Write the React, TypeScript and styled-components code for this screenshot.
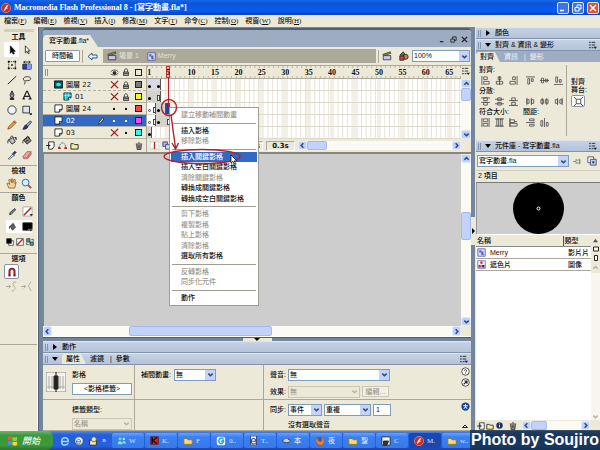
import React from "react";
import styled, { createGlobalStyle, css } from "styled-components";

const sans = `"Liberation Sans", "Noto Sans CJK TC", sans-serif`;
const serif = `"Liberation Serif", "Noto Sans CJK TC", serif`;
const c = {
  face: "#ece9d8",
  line: "#aca899",
  edge: "#73869c",
  dark: "#4a5f78",
  tab: "#9dacc1",
  select: "#316ac5",
  field: "#7f9db9",
  head: "#b4c3d9",
  ink: "#111",
  dim: "#9b988c",
  red: "#b5202c",
};

const GlobalStyle = createGlobalStyle`
  *, *::before, *::after { box-sizing: border-box; }
  body { margin: 0; overflow: hidden; }
  button, input, select { font: inherit; color: inherit; margin: 0; padding: 0; border-radius: 0; }
  svg { display: block; flex: none; }
`;

const Shell = styled.div`
  position: relative;
  display: grid;
  grid-template-rows: 15px 12px minmax(0, 1fr) 19px;
  height: 100vh;
  background: ${c.face};
  color: ${c.ink};
  font: 500 7px/10px ${sans};
  white-space: nowrap;
`;

/* ---------- window chrome ---------- */

const TitleBar = styled.header`
  display: flex;
  align-items: center;
  gap: 3px;
  padding: 0 1px 0 1px;
  background: linear-gradient(#1a66e4, #0a55dc 25%, #0a5cf0 70%, #0743c4);
  color: #fff;
`;
const Title = styled.h1`
  flex: 1;
  margin: 0;
  font: 700 8px/12px ${serif};
`;
const WinButton = styled.button<{ $close?: boolean }>`
  display: grid;
  place-items: center;
  width: 12px;
  height: 12px;
  border: 1px solid #dce6fa;
  border-radius: 2px;
  background: ${(p) => (p.$close ? "#dc5331" : "#3c74e6")};
`;
const MenuBar = styled.nav`
  display: flex;
  align-items: center;
  gap: 7px;
  padding-left: 4px;
  font-family: ${serif};
`;
const MenuEntry = styled.button`
  border: 0;
  background: none;
  u { text-decoration-thickness: 1px; }
`;
const Body = styled.div`
  display: grid;
  grid-template-columns: 38px minmax(0, 1fr) 125px;
  min-height: 0;
`;

/* ---------- toolbox ---------- */

const ToolBox = styled.aside`
  display: flex;
  flex-direction: column;
  padding-top: 2px;
  border-right: 1px solid #fff;
`;
const Grip = styled.div`
  height: 3px;
  margin: 0 3px 0 4px;
  background: #d3cfbf;
`;
const ToolHeading = styled.h2`
  margin: 0;
  font: 700 7px/10px ${sans};
  text-align: center;
`;
const ToolSection = styled.section<{ $h: number }>`
  min-height: ${(p) => p.$h}px;
  border-bottom: 1px solid ${c.line};
`;
const ToolGrid = styled.div`
  display: grid;
  grid-template-columns: 15px 15px;
  grid-auto-rows: 15px;
  margin-left: 4px;
`;
const Tool = styled.button<{ $on?: boolean; $boxed?: boolean }>`
  display: grid;
  place-items: center;
  border: 1px solid ${(p) => (p.$boxed ? "#8a93a8" : "transparent")};
  border-radius: ${(p) => (p.$boxed ? 2 : 0)}px;
  background: ${(p) => (p.$on ? "#fff" : "none")};
`;
const FillRow = styled.div<{ $on?: boolean }>`
  display: grid;
  grid-template-columns: 14px 12px;
  align-items: center;
  height: ${(p) => (p.$on ? 13 : 17)}px;
  margin: 0 5px 0 6px;
  padding-left: 2px;
  background: ${(p) => (p.$on ? "#fff" : "none")};
`;
const MiniRow = styled.div`
  display: flex;
  gap: 2px;
  padding: 5px 6px 0;
`;

/* ---------- document window ---------- */

const Center = styled.main`
  position: relative;
  display: grid;
  grid-template-rows: minmax(0, 1fr) 4px auto;
  min-width: 0;
  padding: 1px 4px 0 4px;
  background: ${c.edge};
  border-left: 1px solid ${c.dark};
`;
const DocWindow = styled.section`
  display: grid;
  grid-template-rows: 17px 19px auto minmax(0, 1fr) 11px;
  min-height: 0;
  border-top: 2px solid ${c.dark};
  background: ${c.face};
  border-radius: 4px 4px 0 0;
  overflow: hidden;
`;
const TabBar = styled.div`
  display: flex;
  align-items: end;
  justify-content: space-between;
  background: ${c.tab};
  border-radius: 0 4px 0 0;
`;
const DocTab = styled.button`
  height: 12px;
  padding: 0 9px 0 6px;
  border: 0;
  background: ${c.face};
  clip-path: polygon(0 3px, 2px 0, calc(100% - 8px) 0, 100% 100%, 0 100%);
  text-align: left;
`;
const DocButtons = styled.div`
  display: flex;
  gap: 2px;
  padding: 0 2px 3px 0;
`;
const PlainButton = styled.button`
  display: grid;
  place-items: center;
  min-width: 9px;
  height: 9px;
  border: 0;
  background: none;
`;
const EditBar = styled.div`
  display: flex;
  align-items: center;
  padding: 0 1px 0 2px;
  border-bottom: 1px solid ${c.line};
`;
const TimelineButton = styled.button`
  width: 35px;
  height: 12px;
  border: 1px solid #8f9aa8;
  border-radius: 1px;
  background: #fff;
`;
const VRule = styled.i`
  width: 1px;
  height: 13px;
  margin: 0 2px;
  background: ${c.line};
`;
const Crumbs = styled.div`
  display: flex;
  flex: 1;
  align-items: center;
  gap: 2px;
  height: 14px;
  margin-left: 4px;
  padding-left: 4px;
  background: ${c.line};
  color: #e4e1d6;
`;
const Crumb = styled.span`
  margin-right: 6px;
`;
const EditIcons = styled.div`
  display: flex;
  gap: 7px;
  margin: 0 3px 0 1px;
`;

/* ---------- fields ---------- */

const SelectBox = styled.span<{ $w?: number; $off?: boolean }>`
  display: flex;
  width: ${(p) => (p.$w ? `${p.$w}px` : "auto")};
  height: 12px;
  border: 1px solid ${(p) => (p.$off ? "#cac7b8" : c.field)};
  background: ${(p) => (p.$off ? c.face : "#fff")};
  color: ${(p) => (p.$off ? c.dim : c.ink)};
`;
const NativeSelect = styled.select`
  flex: 1;
  min-width: 0;
  padding-left: 1px;
  border: 0;
  background: none;
  appearance: none;
  opacity: 1;
  outline: none;
`;
const DropMark = styled.span<{ $off?: boolean }>`
  display: grid;
  place-items: center;
  width: 10px;
  background: ${(p) => (p.$off ? c.face : "#c3d3fb")};
`;
const TextField = styled.input<{ $w: number }>`
  width: ${(p) => p.$w}px;
  height: 12px;
  border: 1px solid ${c.field};
  background: #fff;
  padding: 0 2px;
  &::placeholder { color: ${c.ink}; opacity: 1; text-align: center; }
`;

/* ---------- timeline ---------- */

const Timeline = styled.div`
  display: grid;
  grid-template-columns: 104px minmax(0, 1fr) 10px;
  grid-template-rows: 13px auto 13px;
  border-bottom: 2px solid #8b8878;
`;
const LayerHead = styled.div`
  display: flex;
  align-items: center;
  justify-content: space-between;
  padding: 0 2px 0 2px;
  border-right: 1px solid ${c.line};
  border-bottom: 1px solid ${c.line};
`;
const HeadIcons = styled.div`
  display: grid;
  grid-template-columns: repeat(3, 12px);
  justify-items: center;
  align-items: center;
`;
const Ruler = styled.div`
  display: grid;
  grid-template-columns: repeat(67, minmax(0, 1fr));
  align-items: center;
  border-bottom: 1px solid ${c.line};
  background:
    linear-gradient(90deg, #b9b5a3 1px, transparent 1px) 0 0 / calc(100% / 67) 2px repeat-x,
    linear-gradient(90deg, #b9b5a3 1px, transparent 1px) 0 100% / calc(100% / 67) 2px repeat-x;
  font: 700 8px/11px ${serif};
`;
const FrameNo = styled.span<{ $at: number }>`
  grid-column: ${(p) => p.$at};
  grid-row: 1;
  display: flex;
  justify-content: center;
`;
const PlayHead = styled.i`
  grid-column: 5;
  grid-row: 1;
  align-self: stretch;
  border: 1px solid #cc3a3a;
  background: #f3a3a0;
`;
const Layers = styled.ul`
  margin: 0;
  padding: 0;
  list-style: none;
  border-right: 1px solid ${c.line};
`;
const LayerRow = styled.li<{ $active?: boolean; $child?: boolean; $dash?: boolean }>`
  display: flex;
  align-items: center;
  gap: 3px;
  height: 12px;
  padding: 0 2px 0 ${(p) => (p.$child ? 20 : 11)}px;
  border-bottom: 1px ${(p) => (p.$dash ? "dashed" : "solid")} #b5b1a1;
  background: ${(p) => (p.$active ? c.select : c.face)};
  color: ${(p) => (p.$active ? "#fff" : c.ink)};
  font-family: "DejaVu Sans", "Noto Sans CJK TC", sans-serif;
`;
const LayerName = styled.span`
  flex: 1;
`;
const Dot = styled.i`
  width: 2px;
  height: 2px;
  background: currentColor;
`;
const Swatch = styled.i<{ $c: string }>`
  width: 7px;
  height: 7px;
  border: 1px solid #222;
  background: ${(p) => p.$c};
`;
const Tracks = styled.div`
  background: #fff;
`;
const Track = styled.div`
  display: grid;
  grid-template-columns: repeat(67, minmax(0, 1fr));
  height: 12px;
  border-bottom: 1px solid #dedacb;
  background: linear-gradient(90deg, transparent calc(100% - 1px), #e6e2d6 0) 0 0 / calc(100% / 67) 100%;
`;
const Shade = styled.i<{ $at: number }>`
  grid-column: ${(p) => p.$at};
  grid-row: 1;
  background: #f3efe6;
`;
const Span = styled.i<{ $from: number; $to: number; $fill: string }>`
  grid-column: ${(p) => p.$from} / ${(p) => p.$to};
  grid-row: 1;
  background: ${(p) => p.$fill};
  border-right: 1px solid #555;
`;
const KeyMark = styled.i<{ $at: number; $kind: "dot" | "ring" | "box" }>`
  grid-column: ${(p) => p.$at};
  grid-row: 1;
  align-self: end;
  justify-self: center;
  width: 3px;
  height: ${(p) => (p.$kind === "box" ? 6 : 3)}px;
  margin-bottom: ${(p) => (p.$kind === "box" ? 1 : 2)}px;
  ${(p) =>
    p.$kind === "dot"
      ? css`background: #000; border-radius: 2px;`
      : css`border: 1px solid #444; background: #fff; border-radius: ${p.$kind === "ring" ? 2 : 0}px;`}
`;
const FootBar = styled.div<{ $rule?: boolean }>`
  display: flex;
  align-items: center;
  gap: 3px;
  padding: 0 ${(p) => (p.$rule ? 3 : 0)}px 0 3px;
  border-right: ${(p) => (p.$rule ? `1px solid ${c.line}` : "0")};
  font: 700 7px/10px "DejaVu Sans", sans-serif;
`;
const FootGap = styled.span`
  flex: 1;
`;
const Cellbox = styled.span<{ $w: number }>`
  width: ${(p) => p.$w}px;
  height: 10px;
  border: 1px solid ${c.line};
  border-right-color: #fff;
  border-bottom-color: #fff;
  text-align: center;
  line-height: 9px;
`;
const ScrollSlot = styled.div<{ $w: number }>`
  width: ${(p) => p.$w}px;
  height: 9px;
  display: grid;
`;

/* ---------- scroll bars ---------- */

const Bar = styled.div<{ $v?: boolean }>`
  display: flex;
  flex-direction: ${(p) => (p.$v ? "column" : "row")};
  min-width: 0;
  min-height: 0;
  background: #fbfaf5;
`;
const BarButton = styled.button`
  display: grid;
  place-items: center;
  flex: 0 0 9px;
  border: 1px solid #e2e9fc;
  border-radius: 2px;
  background: #bfd0fa;
`;
const Part = styled.div<{ $grow: number; $thumb?: boolean }>`
  flex: ${(p) => p.$grow} 0 0;
  ${(p) => p.$thumb && css`border: 1px solid #a5bbee; border-radius: 2px; background: #c2d2fb;`}
`;

const Stage = styled.div`
  display: grid;
  grid-template-columns: minmax(0, 1fr) 10px;
  min-height: 0;
  border-left: 1px solid #8b8878;
`;
const Canvas = styled.div`
  background: #cdcdcd;
`;
const HFoot = styled.div`
  display: grid;
  grid-template-columns: minmax(0, 1fr) 10px;
  border-bottom: 1px solid #fff;
`;
const Splitter = styled.div`
  display: grid;
  justify-content: center;
  background: ${c.edge};
  border-top: 1px solid ${c.dark};
`;
const SplitHandle = styled.button`
  display: grid;
  place-items: center;
  width: 29px;
  height: 3px;
  border: 0;
  background: ${c.face};
`;
const SideHandle = styled.button`
  position: absolute;
  right: 0;
  top: 47%;
  display: grid;
  place-items: center;
  width: 4px;
  height: 28px;
  border: 0;
  background: ${c.face};
`;

/* ---------- panels ---------- */

const PanelHead = styled.div`
  display: flex;
  align-items: center;
  gap: 4px;
  height: 12px;
  padding: 0 3px 0 2px;
  border-top: 1px solid #dfe6f0;
  border-bottom: 1px solid #8393aa;
  background: linear-gradient(#c6d2e4, ${c.head});
`;
const PanelTitle = styled.span`
  flex: 1;
`;
const HeadGrip = styled.i`
  width: 3px;
  height: 7px;
  border: solid #8695ab;
  border-width: 0 1px;
`;
const TabButton = styled.button<{ $on?: boolean; $light?: boolean }>`
  height: 10px;
  align-self: end;
  padding: 0 6px 0 4px;
  border: 0;
  background: ${(p) => (p.$on ? c.face : "none")};
  color: ${(p) => (p.$light ? "#e5ebf4" : c.ink)};
  clip-path: ${(p) => (p.$on ? "polygon(0 2px, 2px 0, calc(100% - 5px) 0, 100% 100%, 0 100%)" : "none")};
`;
const Props = styled.div`
  display: grid;
  grid-template-columns: 92px 129px minmax(0, 1fr) 12px;
  grid-template-rows: 35px 31px;
  background: ${c.face};
`;
const PropCell = styled.div<{ $noRule?: boolean }>`
  display: flex;
  flex-direction: column;
  gap: 4px;
  padding: 3px 3px 0 6px;
  border-right: ${(p) => (p.$noRule ? "0" : `1px solid ${c.line}`)};
  border-bottom: 1px solid ${c.line};
`;
const FrameCell = styled.div`
  display: grid;
  grid-template-columns: 23px 60px;
  grid-template-rows: 14px 13px;
  align-items: center;
  padding: 3px 4px 0 3px;
  border-right: 1px solid ${c.line};
  border-bottom: 1px solid ${c.line};
  column-gap: 3px;
`;
const FrameIcon = styled.div`
  grid-row: 1 / 3;
`;
const FieldRow = styled.div`
  display: flex;
  align-items: center;
  gap: 2px;
  height: 13px;
`;
const Label = styled.label<{ $w?: number }>`
  width: ${(p) => (p.$w ? `${p.$w}px` : "auto")};
`;
const Note = styled.span`
  padding-left: 18px;
`;
const PushButton = styled.button`
  width: 27px;
  height: 11px;
  border: 1px solid #cac7b8;
  background: #f2f0e6;
  color: ${c.dim};
`;
const SideIcons = styled.div<{ $spread?: boolean }>`
  display: flex;
  flex-direction: column;
  align-items: center;
  justify-content: ${(p) => (p.$spread ? "space-between" : "start")};
  gap: 2px;
  padding: 2px 0;
  border-bottom: 1px solid ${c.line};
`;

/* ---------- right column ---------- */

const Right = styled.aside`
  display: flex;
  flex-direction: column;
  min-height: 0;
  border-left: 1px solid #dfe6f0;
`;
const RightTabs = styled.div`
  display: flex;
  align-items: end;
  height: 11px;
  background: ${c.tab};
  color: #e5ebf4;
`;
const AlignPanel = styled.div`
  display: grid;
  grid-template-columns: 88px minmax(0, 1fr);
  height: 78px;
  padding: 3px 0 4px 3px;
`;
const AlignLeft = styled.div`
  border-right: 1px solid ${c.line};
`;
const AlignRow = styled.div`
  display: flex;
  gap: 5px;
  height: 11px;
  padding-left: 2px;
  align-items: center;
`;
const AlignLabels = styled.div`
  display: grid;
  grid-template-columns: 44px 1fr;
  height: 10px;
`;
const AlignBtn = styled.button<{ $gap?: boolean }>`
  width: 9px;
  height: 9px;
  margin-left: ${(p) => (p.$gap ? 3 : 0)}px;
  border: 0;
  background: none;
`;
const StageAlign = styled.div`
  padding: 13px 0 0 4px;
  line-height: 8px;
`;
const StageButton = styled.button`
  display: grid;
  place-items: center;
  width: 14px;
  height: 12px;
  margin-top: 1px;
  border: 1px solid #8a93a8;
  border-radius: 2px;
  background: #fff;
`;
const LibRow = styled.div`
  display: grid;
  grid-template-columns: minmax(0, 1fr) 10px 10px;
  align-items: center;
  gap: 4px;
  height: 18px;
  padding: 0 3px 0 1px;
`;
const LibCount = styled.div`
  height: 12px;
  padding-left: 2px;
  border-top: 1px solid #d3cfbf;
`;
const Preview = styled.div`
  display: grid;
  place-items: center;
  height: 53px;
  border-top: 1px solid #777;
  border-left: 1px solid #999;
  border-bottom: 1px solid #fff;
  background: #cdcdcd;
`;
const LibBody = styled.div`
  display: grid;
  grid-template-columns: minmax(0, 1fr) 9px;
  flex: 1;
  min-height: 0;
  margin-top: 1px;
  background: #fff;
`;
const LibTable = styled.table`
  width: 100%;
  table-layout: fixed;
  border-collapse: collapse;
  align-self: start;
  th {
    height: 10px;
    padding: 0 0 0 1px;
    background: ${c.face};
    border-bottom: 1px solid #888;
    font-weight: 500;
    text-align: left;
  }
  th + th { border-left: 1px solid #555; width: 28px; }
  td { height: 12px; padding: 0 0 0 1px; border-bottom: 1px solid ${c.line}; overflow: hidden; }
  td + td { padding-left: 5px; }
`;
const ItemName = styled.span`
  display: flex;
  align-items: center;
  gap: 4px;
`;
const LibSide = styled.div`
  display: flex;
  flex-direction: column;
  align-items: center;
  justify-content: space-between;
  background: #f7f5ee;
`;
const LibSideTop = styled.div`
  display: grid;
  place-items: center;
  gap: 3px;
  width: 100%;
  padding: 2px 0;
  background: ${c.face};
`;
const LibFoot = styled.div`
  display: grid;
  grid-template-columns: 8px 8px 8px minmax(0, 1fr) 68px 9px;
  gap: 1px;
  align-items: center;
  justify-items: center;
  height: 11px;
  padding-left: 1px;
`;
const FootScroll = styled.div`
  display: grid;
  width: 100%;
  height: 9px;
`;

/* ---------- task bar ---------- */

const TaskBar = styled.footer`
  display: flex;
  align-items: stretch;
  background: linear-gradient(#4d8cf0, #245edb 20%, #2560df 80%, #1941a5);
  color: #fff;
`;
const Start = styled.button`
  display: flex;
  align-items: center;
  gap: 4px;
  width: 53px;
  padding-left: 7px;
  border: 0;
  border-radius: 0 6px 6px 0;
  background: linear-gradient(#6ab56a, #3a973a 25%, #3c9a3c 75%, #2a752a);
  font: italic 500 9px/14px ${sans};
  color: #eef8ee;
`;
const Quick = styled.div`
  display: flex;
  align-items: center;
  gap: 4px;
  padding: 0 6px 0 7px;
`;
const Task = styled.button<{ $on?: boolean }>`
  display: flex;
  flex: 0 1 32px;
  align-items: center;
  gap: 3px;
  margin: 2px 1px 2px 0;
  padding: 0 0 0 5px;
  border: 0;
  border-radius: 2px;
  background: ${(p) => (p.$on ? "#1a48b0" : "linear-gradient(#6ba3fa, #3c81f3 25%, #3578ea)")};
  color: #dbe8fd;
  font-family: ${serif};
  overflow: hidden;
`;

/* ---------- floating pieces ---------- */

const ContextMenu = styled.div`
  position: absolute;
  left: 169px;
  top: 107px;
  display: flex;
  flex-direction: column;
  width: 90px;
  height: 199px;
  padding: 2px 1px;
  border: 1px solid #a09d90;
  background: #fff;
`;
const ContextItem = styled.button<{ $on?: boolean }>`
  flex: 1;
  min-height: 0;
  padding: 0 0 0 10px;
  border: 0;
  background: ${(p) => (p.$on ? c.select : "none")};
  color: ${(p) => (p.$on ? "#fff" : c.ink)};
  line-height: 10px;
  text-align: left;
  &:disabled { color: ${c.dim}; }
`;
const ContextRule = styled.hr`
  width: calc(100% - 2px);
  height: 1px;
  margin: 2px 1px;
  border: 0;
  background: #a09d90;
`;
const Marks = styled.svg`
  position: absolute;
  left: 158px;
  top: 76px;
  pointer-events: none;
`;
const Credit = styled.div`
  position: absolute;
  right: 0;
  bottom: 0;
  height: 20px;
  width: 130px;
  background: rgba(22, 46, 66, 0.82);
  color: #fff;
  font: 700 16px/20px "Liberation Sans", Arial, sans-serif;
  text-align: center;
`;

/* ---------- drawings ---------- */

type IcoProps = { s?: number; w?: number; h?: number; vb?: string; children: React.ReactNode };
const Ico = ({ s = 10, w, h, vb = "0 0 12 12", children }: IcoProps) => (
  <svg width={w ?? s} height={h ?? s} viewBox={vb} fill="none" stroke="#222" strokeWidth="1" aria-hidden="true">
    {children}
  </svg>
);

const arrows: Record<string, string> = {
  down: "M1.5 3 4 5.5 6.5 3",
  up: "M1.5 5.5 4 3 6.5 5.5",
  left: "M5 1.5 2.5 4 5 6.5",
  right: "M3 1.5 5.5 4 3 6.5",
};
const Chevron = ({ dir, off }: { dir: string; off?: boolean }) => (
  <svg width="7" height="7" viewBox="0 0 8 8" fill="none" stroke={off ? "#b9b6a6" : "#2f4a7c"} strokeWidth="1.7">
    <path d={arrows[dir]} />
  </svg>
);
const Tri = ({ open }: { open?: boolean }) => (
  <Ico s={6} vb="0 0 6 6">
    <path d={open ? "M0 1h6L3 5z" : "M1 0v6l4-3z"} fill="#000" stroke="none" />
  </Ico>
);
const PanelMenu = () => (
  <Ico s={8} vb="0 0 9 9">
    <path d="M0 1.5h2M0 4.5h2M0 7.5h2M3 1.5h4M3 4.5h4M3 7.5h2" />
    <path d="M5 6.5h4L7 9z" fill="#222" stroke="none" />
  </Ico>
);

const toolIcons: React.ReactNode[] = [
  <path d="M4 1v9l2-2 1.400 3 1.400-.7L7.500 7.500h2.500z" fill="#000" />,
  <path d="M4 1v8.500l2-2 1.400 3 1.200-.6L7.300 7h2.500z" fill="#fff" />,
  <><path d="M2 2h8v8H2z" strokeDasharray="1.500 1" /><path d="M1 1h2v2H1zM9 1h2v2H9zM1 9h2v2H1zM9 9h2v2H9zM5 5h2v2H5z" fill="#000" stroke="none" /></>,
  <><path d="M1 5h10v6H1z" fill="#2b3fa8" stroke="#223" /><path d="M6 5h5v6H6z" fill="#8b9be8" stroke="none" /><path d="M2 2.500h8M4 1 2 2.500 4 4M8 1l2 1.500L8 4" /></>,
  <path d="M1 11 11 1.500" strokeWidth="1.200" />,
  <path d="M3 7C0 5 2 2 6.500 2s5 3.500 2 4.500S4 6 3.500 7.500 5 10 2.500 11" />,
  <><path d="M6 1 3.500 6 5 9h2l1.500-3z" fill="#99a" /><path d="M6 2v4M4 9.500h4V12H4z" fill="#334" /></>,
  <path d="M1.500 10.500 5.500 1.500h1l4 9M0.500 10.700h3M8 10.700h3.500M3.200 7.500h5.500" strokeWidth="1.500" />,
  <circle cx="6" cy="6" r="5" fill="#eef0ff" />,
  <><path d="M1 1.500h8v8H1z" fill="#dfe1f0" /><path d="M9 10.500h3L10.500 12z" fill="#000" /></>,
  <><path d="m1 11 1-3L9 1l2 2-7 7z" fill="#eea23c" stroke="#844a18" /><path d="m8 2 2 2" stroke="#b33" /></>,
  <><path d="m5 6 5-5 1.500 1.500L7 8z" fill="#9ab0d8" stroke="#334" /><path d="M5 6C2 6.500 3 9 1 11c3 0 5.500-.5 6-3z" fill="#273f77" /></>,
  <><path d="m2 6 5-3 3 5-4 3z" fill="#bbb" /><path d="M3 5c-2 0-2 3-2 5M4 4c0-4 4-3 4 0" /><path d="M9 3h2v3" fill="#555" /></>,
  <><path d="m2 6 5-4 4 5-5 4z" fill="#888" /><path d="M4 5c-3 0-3 3-3 5M5 5c0-5 4-4 4 0M4 8l4-2" /></>,
  <><path d="M1.500 10.500 7 5l1.500 1.500L3 11z" fill="#fff" stroke="#446" /><path d="m6 4 3 3M7 4l2.500-2.500 1.500 1.500L8.500 5.500z" fill="#223a80" stroke="#223a80" /></>,
  <><path d="m1 8 5-6h5L6 9H2z" fill="#eda5a5" stroke="#a35a5a" /><path d="m6 9 5-6v2L7 10.500H2L1 8" fill="#d78484" stroke="#a35a5a" strokeWidth=".7" /></>,
];
const toolNames = ["選取", "部份選取", "任意變形", "填色變形", "線條", "套索", "鋼筆", "文字", "橢圓形", "矩形", "鉛筆", "筆刷", "墨水瓶", "油漆桶", "滴管", "橡皮擦"];

const PageIcon = () => (
  <Ico s={9} vb="0 0 10 10">
    <path d="M1 1h8v5L6 9H1z" fill="#fff" /><path d="M9 6H6v3" />
  </Ico>
);
const MaskIcon = () => (
  <Ico s={9} vb="0 0 10 10">
    <path d="M.5 1h9v8h-9z" fill="#035a62" stroke="#012" /><ellipse cx="5" cy="5" rx="2.700" ry="2" fill="#3fe0dd" stroke="none" />
  </Ico>
);
const MaskedIcon = () => (
  <Ico s={9} vb="0 0 10 10">
    <path d="M1 1h8v5L6 9H1z" fill="#36b9c5" stroke="#045" /><path d="M3 1v8M6 1v8M1 4h8" stroke="#bff" strokeWidth=".6" /><path d="M9 6H6v3" fill="#fff" />
  </Ico>
);
const Lock = () => (
  <Ico s={8} vb="0 0 10 10">
    <path d="M3 5V3c0-2.500 4-2.500 4 0v2" /><path d="M2 5h6v4.500H2z" fill="#bbb" /><path d="M2 7h6" />
  </Ico>
);
const RedX = () => (
  <Ico s={9} vb="0 0 10 10"><path d="m1 1.500 8 7.500M9 1 1 9" stroke="#a31818" strokeWidth="1.400" /></Ico>
);
const Trash = () => (
  <Ico s={8} vb="0 0 10 10"><path d="M1 2.500h8M4 1h2M2 3l.7 6.500h4.600L8 3M4 4v4M6 4v4" fill="#aaa" /></Ico>
);
const Clip = () => (
  <Ico s={10}><path d="M1.500 5.500h9v5h-9z" fill="#c9c9ec" stroke="#335" /><path d="m1 4 9-3 .5 2-9 2.500z" fill="#8fa04a" stroke="#443" /></Ico>
);
const MovieClip = () => (
  <Ico s={9}><path d="M1 1h10v10H1z" fill="#d8dcfa" stroke="#4b50a4" /><path d="M3 3h3v3H3zM5.500 6l3-2v4l1 1.500H6z" fill="#5661b8" stroke="none" /></Ico>
);
const GraphicIcon = () => (
  <Ico s={9}><path d="M1 1h10v10H1z" fill="#fff" stroke="#4b50a4" /><circle cx="6" cy="3.500" r="1.800" fill="#d33" stroke="none" /><path d="M2 10V6.500h3V10z" fill="#c22" stroke="none" /><path d="M6 10V6.500h4V10z" fill="#339" stroke="none" /></Ico>
);
const FolderIcon = () => (
  <Ico s={10}><path d="M1 3h4l1 1.500h5V10H1z" fill="#f3dc80" stroke="#907420" /></Ico>
);
const FlashDisc = ({ s = 10 }: { s?: number }) => (
  <Ico s={s}>
    <circle cx="6" cy="6" r="5.500" fill="#cf2a1c" stroke="#f29a86" strokeWidth=".8" />
    <path d="M8.500 3C5.500 3 6 6 4 9M5 6h2.700" stroke="#fff" strokeWidth="1.500" />
  </Ico>
);

type LayerData = {
  name: string; icon: React.ReactNode; child?: boolean; dash?: boolean; active?: boolean;
  hidden?: boolean; locked?: boolean; color: string;
  spans: [number, number, string][];
  marks: [number, "dot" | "ring" | "box"][];
};
const layers: LayerData[] = [
  { name: "圖層 22", icon: <MaskIcon />, dash: true, hidden: true, locked: true, color: "#7c7c7c", spans: [[1, 4, "#d9d8e6"]], marks: [[1, "dot"], [3, "dot"]] },
  { name: "01", icon: <MaskedIcon />, child: true, hidden: true, locked: true, color: "#f8f53c", spans: [[1, 4, "#d4d2cc"]], marks: [[1, "dot"], [3, "box"]] },
  { name: "圖層 24", icon: <PageIcon />, color: "#f04a48", spans: [[1, 3, "#fff"], [3, 5, "#d4d2cc"], [5, 6, "#24429c"]], marks: [[1, "ring"], [2, "box"], [3, "dot"]] },
  { name: "02", icon: <PageIcon />, active: true, color: "#ee4cf0", spans: [[1, 3, "#fff"], [3, 6, "#d4d2cc"]], marks: [[1, "ring"], [2, "box"], [3, "dot"], [5, "box"]] },
  { name: "03", icon: <PageIcon />, hidden: true, color: "#48efea", spans: [[1, 2, "#d4d2cc"]], marks: [[1, "dot"]] },
];
const fives = Array.from({ length: 13 }, (_, i) => (i + 1) * 5);

const menus: [string, string][] = [
  ["檔案", "F"], ["編輯", "E"], ["檢視", "V"], ["插入", "I"], ["修改", "M"],
  ["文字", "T"], ["命令", "C"], ["控制", "O"], ["視窗", "W"], ["說明", "H"],
];

type Entry = { t: string; off?: boolean; on?: boolean } | null;
const contextItems: Entry[] = [
  { t: "建立移動補間動畫", off: true }, null,
  { t: "插入影格" }, { t: "移除影格", off: true }, null,
  { t: "插入關鍵影格", on: true }, { t: "插入空白關鍵影格" }, { t: "清除關鍵影格", off: true },
  { t: "轉換成關鍵影格" }, { t: "轉換成空白關鍵影格" }, null,
  { t: "剪下影格", off: true }, { t: "複製影格", off: true }, { t: "貼上影格", off: true },
  { t: "清除影格", off: true }, { t: "選取所有影格" }, null,
  { t: "反轉影格", off: true }, { t: "同步化元件", off: true }, null,
  { t: "動作" },
];

const alignPaths: string[][] = [
  ["M1 0v10M3 1h4v3H3zM3 6h6v3H3z", "M5 0v10M3.500 1h3v3h-3zM1.500 6h7v3h-7z", "M9 0v10M4 1h3v3H4zM1 6h6v3H1z", "M0 1h10M2 3h2v6H2zM6 3h2v3H6z", "M0 5h10M1.500 2.500h2.500v5H1.500zM6 3.500h2.500v3H6z", "M0 9.500h10M2 1h2v6H2zM6 4h2v3H6z"],
  ["M0 1h10M0 6h10M3 1h4v3H3zM3 6h4v3H3z", "M0 2.500h10M0 7.500h10M3 1h4v3H3zM3 6h4v3H3z", "M0 4h10M0 9.500h10M3 1h4v3H3zM3 6h4v3H3z", "M1 1v8M6 1v8M1 3h2.500v4H1zM6 3h2.500v4H6z", "M2.500 1v8M7.500 1v8M1 3h3v4H1zM6 3h3v4H6z", "M4 1v8M9 1v8M1.500 3H4v4H1.500zM6.500 3H9v4H6.500z"],
  ["M1 0v10M9 0v10M2.500 1h5v3h-5zM2.500 6h5v3h-5z", "M0 1h10M0 9h10M2 1h2v8H2zM6 1h2v8H6z", "M1 0v10M1 2h5v3H1zM1 6h8v3H1zM6 4h3", "M0 5h10M4 1h5v2H4zM4 7h5v2H4z", "M5 0v10M1 3h2v6H1zM7 5h2v4H7z"],
];
const AlignIcons = ({ row }: { row: number }) => (
  <AlignRow>
    {alignPaths[row].map((d, i) => (
      <AlignBtn key={d} $gap={i === 3} aria-label={`排列 ${row + 1}-${i + 1}`}>
        <Ico s={9} vb="0 0 10 10"><path d={d} stroke="#4a4a4a" strokeWidth=".9" /></Ico>
      </AlignBtn>
    ))}
  </AlignRow>
);

const Scroll = ({ v, parts }: { v?: boolean; parts: [number, number, number] }) => (
  <Bar $v={v}>
    <BarButton aria-label="向前捲動"><Chevron dir={v ? "up" : "left"} /></BarButton>
    <Part $grow={parts[0]} />
    <Part $grow={parts[1]} $thumb />
    <Part $grow={parts[2]} />
    <BarButton aria-label="向後捲動"><Chevron dir={v ? "down" : "right"} /></BarButton>
  </Bar>
);

const Pick = ({ id, value, w, off, label }: { id: string; value: string; w?: number; off?: boolean; label?: string }) => (
  <SelectBox $w={w} $off={off}>
    <NativeSelect id={id} aria-label={label} disabled={off} defaultValue={value}>
      <option>{value}</option>
    </NativeSelect>
    <DropMark $off={off}><Chevron dir="down" off={off} /></DropMark>
  </SelectBox>
);

const tasks: { t: string; on?: boolean; icon: React.ReactNode }[] = [
  { t: "W", icon: <Ico s={9}><circle cx="4" cy="3.500" r="2" fill="#7be07b" stroke="none" /><circle cx="9" cy="4" r="1.700" fill="#9fe8f8" stroke="none" /><path d="M1 11c0-6 6-6 6 0zM7 10c0-5 5-4 5 0z" fill="#8fe0c0" stroke="none" /></Ico> },
  { t: "K.", icon: <Ico s={9}><path d="M1 1h10v10H1z" fill="#d62222" stroke="#700" /><path d="M3 2v8M9 2 4 6l5 4" stroke="#111" strokeWidth="2" /></Ico> },
  { t: "F", icon: <FolderIcon /> },
  { t: "0..", icon: <Ico s={10}><rect x="1" y="1" width="10" height="10" rx="2" fill="#f4fbff" stroke="none" /><path d="M9 3C5 1 2 5 4 8s6 0 5-3L6 7" stroke="#21a5d8" strokeWidth="1.700" /></Ico> },
  { t: "T..", icon: <Ico s={9}><path d="M2 0h8v12H2z" fill="#fff" stroke="#224" /><path d="M3 7h6c0-5-6-5-6 0s5 4 6 2" stroke="#2453b8" strokeWidth="1.400" /></Ico> },
  { t: "本", icon: <Ico s={9}><ellipse cx="6" cy="6.500" rx="5" ry="2.500" fill="#ccd" /><path d="M3 4.500h5" stroke="#fff" /></Ico> },
  { t: "夜", icon: <Ico s={10}><circle cx="6" cy="6" r="5" fill="#3a5bc0" stroke="none" /><path d="M1 4c0 9 10 9 10 2C11 2 8 1 7 1c3 3 1 6-1 6S3 5 4 3z" fill="#f08522" stroke="#b44a10" strokeWidth=".5" /></Ico> },
  { t: "聖", icon: <FolderIcon /> },
  { t: "C", icon: <Ico s={10}><path d="M1 1h10v10H1z" fill="#eee" stroke="#222" /><path d="M3 6h6l-2 5H3z" fill="#333" /></Ico> },
  { t: "M.", on: true, icon: <FlashDisc s={10} /> },
  { t: "w..", icon: <FolderIcon /> },
];

export default function App() {
  return (
    <Shell>
      <GlobalStyle />
      <TitleBar>
        <FlashDisc />
        <Title>Macromedia Flash Professional 8 - [寫字動畫.fla*]</Title>
        <WinButton aria-label="最小化"><Ico s={8} vb="0 0 8 8"><path d="M1 6.500h4" stroke="#fff" strokeWidth="1.500" /></Ico></WinButton>
        <WinButton aria-label="還原"><Ico s={8} vb="0 0 8 8"><path d="M1 3.500h4V7H1zM3 3V1h4v4H5" stroke="#fff" /></Ico></WinButton>
        <WinButton $close aria-label="關閉"><Ico s={8} vb="0 0 8 8"><path d="m1 1 6 6M7 1 1 7" stroke="#fff" strokeWidth="1.500" /></Ico></WinButton>
      </TitleBar>
      <MenuBar>
        {menus.map(([t, k]) => <MenuEntry key={k}>{t}(<u>{k}</u>)</MenuEntry>)}
      </MenuBar>

      <Body>
        <ToolBox>
          <Grip />
          <ToolSection $h={134}>
            <ToolHeading>工具</ToolHeading>
            <ToolGrid>
              {toolIcons.map((icon, i) => (
                <Tool key={toolNames[i]} $on={i === 0} aria-label={toolNames[i]}><Ico s={10}>{icon}</Ico></Tool>
              ))}
            </ToolGrid>
          </ToolSection>
          <ToolSection $h={27}>
            <ToolHeading>檢視</ToolHeading>
            <ToolGrid>
              <Tool aria-label="手形"><Ico s={11}><path d="M3 11 1 6l1.500-.5L4 7 3 2l1.500-.5L6 5V1h1.500v4L9 1.500l1.300.5L9.500 6 11 4.500 9.500 11z" fill="#f6cf98" stroke="#84561c" strokeWidth=".8" /></Ico></Tool>
              <Tool aria-label="縮放"><Ico s={11}><circle cx="5" cy="5" r="3.700" fill="#d3efff" stroke="#3a5a9c" /><path d="m8 8 3 3" stroke="#a24a3a" strokeWidth="2" /></Ico></Tool>
            </ToolGrid>
          </ToolSection>
          <ToolSection $h={61}>
            <ToolHeading>顏色</ToolHeading>
            <FillRow>
              <Ico s={9}><path d="m2 10 1-3 6-5 1 2-6 6z" fill="#888" /></Ico>
              <Ico s={11}><path d="M1 1h10v10H1z" fill="#fff" stroke="#aaa" /><path d="M2 10 10 2" stroke="#a22" strokeWidth="1.500" /><path d="M8 9h4l-2 2z" fill="#000" stroke="none" /></Ico>
            </FillRow>
            <FillRow $on>
              <Ico s={9}><path d="m3 6 4-3 3 4-4 4z" fill="#666" /><path d="M4 5C1 5 2 8 2 9M5 5c0-4 3-4 3-1" /></Ico>
              <Ico s={11}><path d="M1 2h10v8H1z" fill="#000" /><path d="M7 9h5l-2.500 2.500z" fill="#000" stroke="#fff" strokeWidth=".5" /></Ico>
            </FillRow>
            <MiniRow>
              <Ico s={8}><path d="M4 4h7v7H4z" fill="#fff" /><path d="M1 1h7v7H1z" fill="#000" /></Ico>
              <Ico s={8}><path d="M1 1h10v10H1z" fill="#fff" /><path d="M2 10 10 2" stroke="#a22" strokeWidth="2" /></Ico>
              <Ico s={8}><path d="M1 1h5v5H1zM6 6h5v5H6z" fill="#4a9aa0" /><path d="M8 2h3v3M4 10H1V7" /></Ico>
            </MiniRow>
          </ToolSection>
          <ToolSection $h={91}>
            <ToolHeading>選項</ToolHeading>
            <ToolGrid>
              <Tool $on $boxed aria-label="貼齊物件"><Ico s={10}><path d="M3 11V5c0-4 6-4 6 0v6" stroke="#a51c1c" strokeWidth="2.500" /><path d="M2 10h2M8 10h2" stroke="#333" strokeWidth="2" /></Ico></Tool>
              <span />
              <Tool aria-label="平滑化"><Ico s={11}><path d="M0 6h5M3 4l2 2-2 2M11 1C7 1 7 4 9 6s0 5-3 5" stroke="#aaa695" /></Ico></Tool>
              <Tool aria-label="直線化"><Ico s={11}><path d="M0 6h5M3 4l2 2-2 2M11 1 8 5l3 6" stroke="#aaa695" /></Ico></Tool>
            </ToolGrid>
          </ToolSection>
        </ToolBox>

        <Center>
          <DocWindow>
            <TabBar>
              <DocTab>寫字動畫.fla*</DocTab>
              <DocButtons>
                <PlainButton aria-label="最小化文件"><Ico s={7} vb="0 0 8 8"><path d="M1 6.500h4" strokeWidth="1.500" /></Ico></PlainButton>
                <PlainButton aria-label="還原文件"><Ico s={7} vb="0 0 8 8"><path d="M1 3.500h4V7H1zM3 3V1h4v4H5" /></Ico></PlainButton>
                <PlainButton aria-label="關閉文件"><Ico s={7} vb="0 0 8 8"><path d="m1 1 6 6M7 1 1 7" strokeWidth="1.500" /></Ico></PlainButton>
              </DocButtons>
            </TabBar>
            <EditBar>
              <TimelineButton>時間軸</TimelineButton>
              <VRule />
              <PlainButton aria-label="返回"><Ico w={14} h={9} vb="2 0 14 9"><path d="M5 4.500 9 1v2h5v3H9v2z" fill="#dff2ff" stroke="#2c5c94" /></Ico></PlainButton>
              <Crumbs>
                <Clip /><Crumb>場景 1</Crumb>
                <MovieClip /><Crumb>Merry</Crumb>
              </Crumbs>
              <VRule />
              <EditIcons>
                <Clip />
                <Ico s={10}><path d="m1 5 4-4 3 4z" fill="#3fa05a" /><circle cx="8" cy="7" r="3" fill="#e0782c" /><path d="M1 6h5v5H1z" fill="#c44" /></Ico>
              </EditIcons>
              <Pick id="zoom" label="縮放比例" value="100%" w={58} />
            </EditBar>

            <Timeline>
              <LayerHead>
                <HeadGrip />
                <HeadIcons>
                  <Ico s={9}><path d="M1 5c3-3 7-3 10 0M1 8c3 2 7 2 10-1" /><circle cx="6" cy="6.500" r="2" fill="#222" /></Ico>
                  <Lock />
                  <Swatch $c="transparent" />
                </HeadIcons>
              </LayerHead>
              <Ruler>
                <PlayHead />
                <FrameNo $at={1}>1</FrameNo>
                {fives.map((n) => <FrameNo key={n} $at={n}>{n}</FrameNo>)}
              </Ruler>
              <PlainButton aria-label="影格檢視"><PanelMenu /></PlainButton>

              <Layers>
                {layers.map((l) => (
                  <LayerRow key={l.name} $active={l.active} $child={l.child} $dash={l.dash}>
                    {l.icon}
                    <LayerName>{l.name}</LayerName>
                    {l.active && <Ico s={8} vb="0 0 10 10"><path d="m2 9 .5-2.500L7 1l1.500 1.500L4 8z" fill="#f5e08a" /></Ico>}
                    <HeadIcons>
                      {l.hidden ? <RedX /> : <Dot />}
                      {l.locked ? <Lock /> : <Dot />}
                      <Swatch $c={l.color} />
                    </HeadIcons>
                  </LayerRow>
                ))}
              </Layers>
              <Tracks>
                {layers.map((l) => (
                  <Track key={l.name}>
                    {fives.map((n) => <Shade key={n} $at={n} />)}
                    {l.spans.map(([a, b, f]) => <Span key={a} $from={a} $to={b} $fill={f} />)}
                    {l.marks.map(([a, k]) => <KeyMark key={a} $at={a} $kind={k} />)}
                  </Track>
                ))}
              </Tracks>
              <Scroll v parts={[0, 12, 30]} />

              <FootBar $rule>
                <Ico s={9} vb="0 0 10 10"><path d="M3 1h6v5L7 9H3zM0 5h5M3 3v4" fill="#fff" /></Ico>
                <Ico s={9} vb="0 0 10 10"><path d="M1 8c1-8 7-8 8 0" stroke="#3c55a5" strokeDasharray="2 1" /><path d="M0 7h3v2H0zM7 7h3v2H7z" fill="#b22" stroke="none" /></Ico>
                <Ico s={9} vb="0 0 10 10"><path d="M1 3h3l1 1h4v5H1z" fill="#f6eca8" /></Ico>
                <FootGap />
                <Trash />
              </FootBar>
              <FootBar>
                <Ico s={9} vb="0 0 10 10"><path d="M0 1h10v8H0z" fill="#fff" stroke="#ccc" /><path d="M5 1v8" stroke="#b22" strokeWidth="1.500" /></Ico>
                <Ico s={9} vb="0 0 10 10"><path d="M1 1h5v5H1z" fill="#aab6e4" stroke="#447" /><path d="M4 4h5v5H4z" fill="#d6dcf6" stroke="#447" /></Ico>
                <FootGap />
                <Cellbox $w={38}>12.0 fps</Cellbox>
                <Cellbox $w={29}>0.3s</Cellbox>
                <ScrollSlot $w={163}><Scroll parts={[0, 18, 126]} /></ScrollSlot>
              </FootBar>
              <FootBar />
            </Timeline>

            <Stage>
              <Canvas />
              <Scroll v parts={[51, 26, 80]} />
            </Stage>
            <HFoot>
              <Scroll parts={[77, 142, 180]} />
              <span />
            </HFoot>
          </DocWindow>
          <Splitter>
            <SplitHandle aria-label="收合面板"><Ico w={6} h={3} vb="0 0 6 3"><path d="M0 0h6L3 3z" fill="#000" stroke="none" /></Ico></SplitHandle>
          </Splitter>

          <section>
            <PanelHead><HeadGrip /><Tri /><PanelTitle>動作</PanelTitle></PanelHead>
            <PanelHead>
              <HeadGrip /><Tri open />
              <PanelTitle>
                <TabButton $on>屬性</TabButton>
                <TabButton>濾鏡</TabButton>|
                <TabButton>參數</TabButton>
              </PanelTitle>
              <PanelMenu />
            </PanelHead>
            <Props>
              <FrameCell>
                <FrameIcon>
                  <Ico s={20} vb="0 0 20 20"><path d="M0 0h20v20H0z" fill="#f3f1e8" stroke="#888" /><path d="M3 4v13M6 4v13M14 4v13M17 4v13M1 15h18" stroke="#aaa" /><path d="M8 4h4v13H8z" fill="#333" /><path d="M10 0v20" stroke="#111" /></Ico>
                </FrameIcon>
                <Label htmlFor="frame-name">影格</Label>
                <TextField id="frame-name" $w={60} placeholder="<影格標籤>" />
              </FrameCell>
              <PropCell>
                <FieldRow><Label htmlFor="tween" $w={31}>補間動畫:</Label><Pick id="tween" value="無" w={42} /></FieldRow>
              </PropCell>
              <PropCell $noRule>
                <FieldRow><Label htmlFor="sound" $w={16}>聲音:</Label><Pick id="sound" value="無" w={102} /></FieldRow>
                <FieldRow><Label htmlFor="effect" $w={16}>效果:</Label><Pick id="effect" value="無" w={72} off /><PushButton disabled>編輯...</PushButton></FieldRow>
              </PropCell>
              <SideIcons>
                <Ico s={9}><circle cx="6" cy="6" r="5" fill="#fff" /><path d="M4.500 5c0-2 3-2 3 0C7.500 6 6 6 6 7.500M6 8.500v1" /></Ico>
                <Ico s={9}><circle cx="6" cy="6" r="5" fill="#fff" /><path d="m3.500 8.500 4-4M4.500 4H8v3.500" strokeWidth="1.600" /></Ico>
              </SideIcons>
              <FrameCell>
                <span />
                <Label htmlFor="label-type">標籤類型:</Label>
                <span />
                <Pick id="label-type" value="名稱" w={60} off />
              </FrameCell>
              <PropCell />
              <PropCell $noRule>
                <FieldRow>
                  <Label htmlFor="sync" $w={16}>同步:</Label><Pick id="sync" value="事件" w={34} />
                  <Pick id="repeat" label="重複方式" value="重複" w={47} />
                  <TextField aria-label="重複次數" $w={18} defaultValue="1" />
                </FieldRow>
                <Note>沒有選取聲音</Note>
              </PropCell>
              <SideIcons $spread>
                <Ico s={9}><circle cx="6" cy="6" r="5.500" fill="#1f448f" stroke="none" /><path d="M3 5h6M6 3v4M6 6 4 9M6 6l2 3" stroke="#fff" strokeWidth="1.300" /></Ico>
                <Ico w={6} h={4} vb="0 0 6 4"><path d="M.5 3.500h5L3 1z" fill="#fff" /></Ico>
              </SideIcons>
            </Props>
          </section>
          <SideHandle aria-label="收合側邊面板"><Ico w={3} h={6} vb="0 0 3 6"><path d="M0 0v6l3-3z" fill="#000" stroke="none" /></Ico></SideHandle>
        </Center>

        <Right>
          <PanelHead><HeadGrip /><Tri /><PanelTitle>顏色</PanelTitle></PanelHead>
          <PanelHead><HeadGrip /><Tri open /><PanelTitle>對齊 &amp; 資訊 &amp; 變形</PanelTitle><PanelMenu /></PanelHead>
          <RightTabs>
            <TabButton $on>對齊</TabButton>
            <TabButton $light>資訊</TabButton>|
            <TabButton $light>變形</TabButton>
          </RightTabs>
          <AlignPanel>
            <AlignLeft>
              <AlignLabels><span>對齊:</span></AlignLabels>
              <AlignIcons row={0} />
              <AlignLabels><span>分散:</span></AlignLabels>
              <AlignIcons row={1} />
              <AlignLabels><span>符合大小:</span><span>間距:</span></AlignLabels>
              <AlignIcons row={2} />
            </AlignLeft>
            <StageAlign>
              對齊<br />舞台:
              <StageButton aria-label="對齊舞台"><Ico s={9}><path d="M3 3h6v6H3zM0 0l3 3M12 0 9 3M0 12l3-3M12 12 9 9" /></Ico></StageButton>
            </StageAlign>
          </AlignPanel>
          <PanelHead><HeadGrip /><Tri open /><PanelTitle>元件庫 - 寫字動畫.fla</PanelTitle><PanelMenu /></PanelHead>
          <LibRow>
            <Pick id="library" label="元件庫" value="寫字動畫.fla" />
            <Ico s={9}><path d="M0 6h4M4 3v6M4 4h5v4H4M9 2v8" stroke="#777" /></Ico>
            <Ico s={10}><path d="M1 1h7v7H1z" fill="#fff" stroke="#446" /><path d="M4 4h7v7H4z" fill="#b9cdf2" stroke="#446" /><path d="M6 7.500h3M7.500 6v3" stroke="#224" /></Ico>
          </LibRow>
          <LibCount>2 項目</LibCount>
          <Preview>
            <Ico s={51} vb="0 0 51 51"><circle cx="25.500" cy="25.500" r="25.500" fill="#000" stroke="none" /><circle cx="25.500" cy="25.500" r="1.500" stroke="#fff" /></Ico>
          </Preview>
          <LibBody>
            <LibTable>
              <thead><tr><th>名稱</th><th>類型</th></tr></thead>
              <tbody>
                <tr><td><ItemName><MovieClip />Merry</ItemName></td><td>影片片</td></tr>
                <tr><td><ItemName><GraphicIcon />遮色片</ItemName></td><td>圖像</td></tr>
              </tbody>
            </LibTable>
            <LibSide>
              <LibSideTop>
                <Ico s={5} vb="0 0 6 6"><path d="M0 5h6L3 1z" fill="#555" stroke="none" /></Ico>
                <Ico s={6} vb="0 0 6 6"><path d="M.5 1h5v4h-5z" fill="#fff" /></Ico>
                <Ico s={6} vb="0 0 6 6"><path d="M1.500.5h3v5h-3z" fill="#fff" /></Ico>
                <Chevron dir="up" off />
              </LibSideTop>
              <Chevron dir="down" off />
            </LibSide>
          </LibBody>
          <LibFoot>
            <Ico s={8} vb="0 0 10 10"><path d="M3 1h6v8H3zM0 5h6M4 3v4" fill="#fff" /></Ico>
            <Ico s={8} vb="0 0 10 10"><path d="M1 3h3l1 1h4v5H1z" fill="#f6eca8" /></Ico>
            <Ico s={7}><circle cx="6" cy="6" r="5.500" fill="#1c2f66" stroke="none" /><path d="M6 5v4M6 2.500v1.300" stroke="#fff" strokeWidth="1.500" /></Ico>
            <Trash />
            <FootScroll><Scroll parts={[0, 14, 34]} /></FootScroll>
          </LibFoot>
        </Right>
      </Body>

      <TaskBar>
        <Start>
          <Ico s={11}><path d="M1 2c2-1 3-1 4.500 0v4C4 5 3 5 1 6z" fill="#ee5a2a" stroke="none" /><path d="M6 2c2 1 3 1 5 0v4c-2 1-3 1-5 0z" fill="#8fd045" stroke="none" /><path d="M1 7c2-1 3-1 4.500 0v4C4 10 3 10 1 11z" fill="#4a90f0" stroke="none" /><path d="M6 7c2 1 3 1 5 0v4c-2 1-3 1-5 0z" fill="#fbd03a" stroke="none" /></Ico>
          開始
        </Start>
        <Quick>
          <Ico s={10}><path d="M2 6.500h8c0-6-8-6-8 0s6 5 8 2" stroke="#9fdcff" strokeWidth="1.800" /></Ico>
          <Ico s={10}><circle cx="6" cy="6" r="5" fill="#e8f2fb" stroke="#456" /><path d="M3 7h5c0-4-5-4-5 0s4 3 5 1" stroke="#2a62b0" /></Ico>
          <Ico s={10}><path d="M2 5h8v6H2z" fill="#efe3c8" /><circle cx="7" cy="4" r="3" fill="#f7e3a4" stroke="#654" /></Ico>
          <span>»</span>
        </Quick>
        {tasks.map((t, i) => <Task key={i} $on={t.on}>{t.icon}{t.t}</Task>)}
      </TaskBar>

      <ContextMenu role="menu">
        {contextItems.map((e, i) =>
          e ? <ContextItem key={e.t} role="menuitem" disabled={e.off} $on={e.on}>{e.t}</ContextItem> : <ContextRule key={i} />
        )}
      </ContextMenu>
      <Marks width="90" height="92" viewBox="0 0 90 92" fill="none" stroke={c.red} strokeWidth="1.400">
        <path d="M10.500 1v30" strokeWidth="1" />
        <ellipse cx="11" cy="31.500" rx="7.500" ry="8" />
        <path d="m13 39 4.500 33M14 67l3.500 6 3-6" />
        <ellipse cx="44" cy="80.500" rx="38" ry="7" />
        <path d="M73 79v8l2-1.700 1.300 2.700 1.200-.6-1.300-2.500h2.600z" fill="#fff" stroke="#000" strokeWidth=".7" />
      </Marks>
      <Credit>Photo by Soujiro</Credit>
    </Shell>
  );
}
